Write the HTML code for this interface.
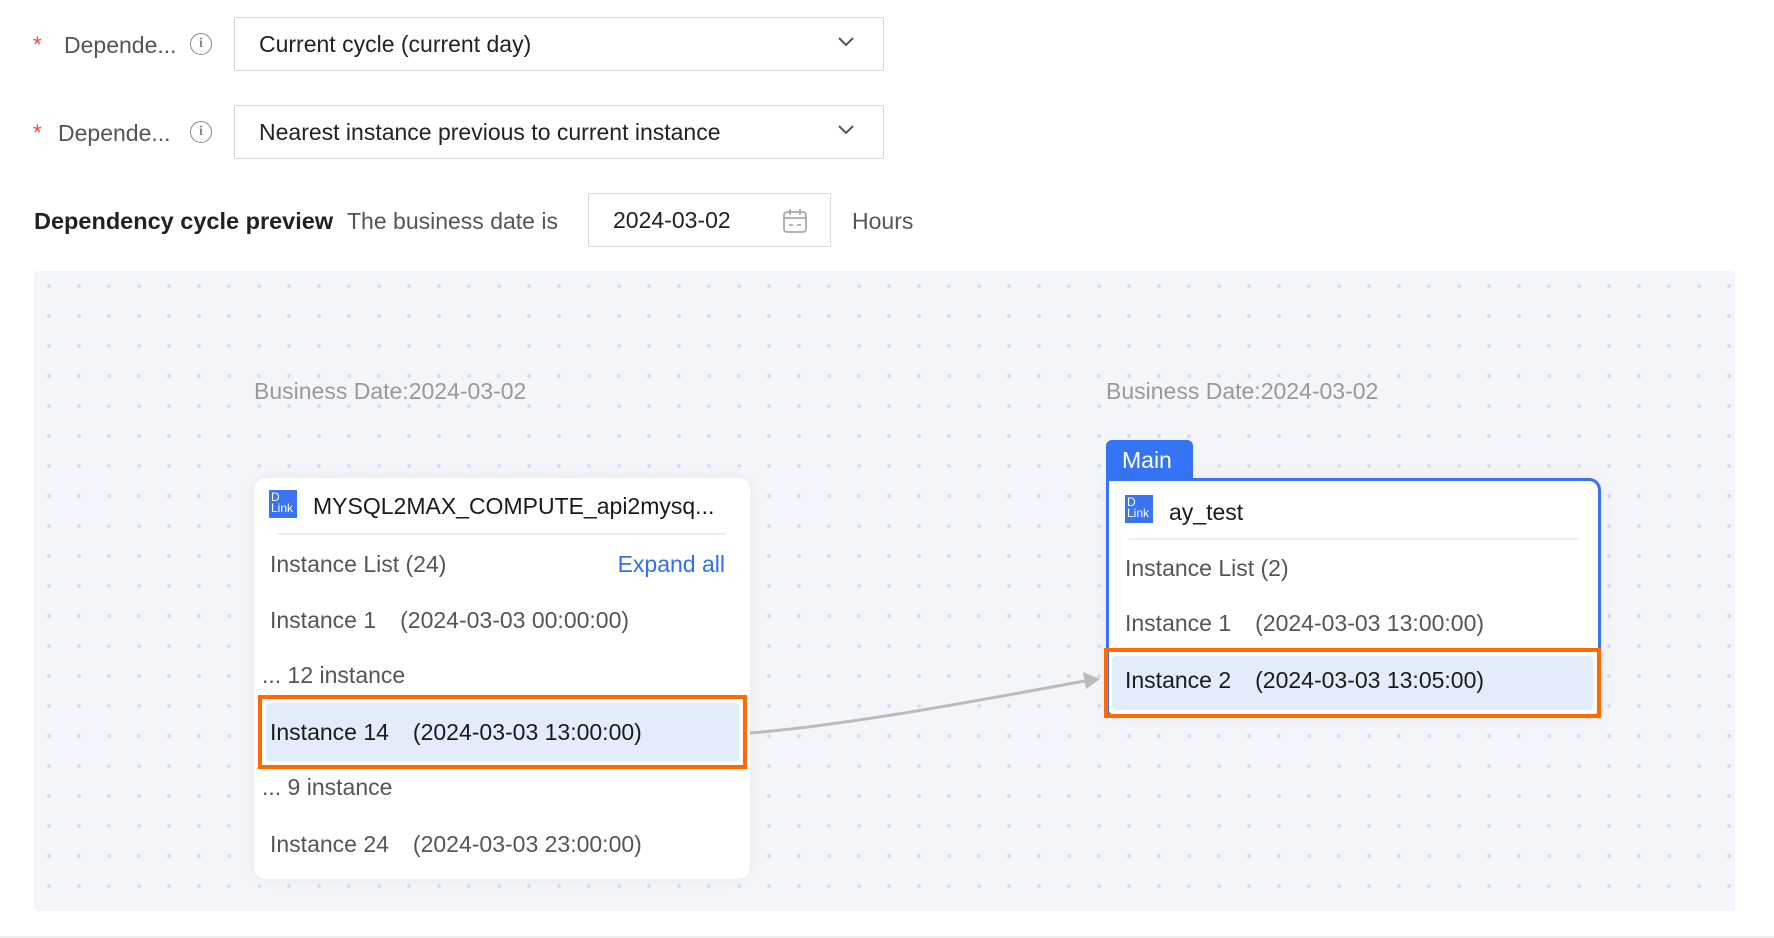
<!DOCTYPE html>
<html><head><meta charset="utf-8"><style>
*{box-sizing:border-box;margin:0;padding:0}
body{width:1774px;height:938px;background:#fff;font-family:"Liberation Sans",sans-serif;color:#333;position:relative;overflow:hidden}
.abs{position:absolute}
.lbl{font-size:23px;color:#555;line-height:26px}
.star{color:#f5463c;font-size:22px}
.sel{position:absolute;left:234px;width:650px;height:54px;border:1px solid #d8d8d8;border-radius:2px;font-size:23px;color:#222;line-height:52px;padding-left:24px}
.chev{position:absolute;right:28px;top:18px}
.info{position:absolute;width:22px;height:22px;border:1.6px solid #888;border-radius:50%;font-size:14px;color:#888;text-align:center;line-height:19px;font-weight:bold;font-family:"Liberation Serif",serif}
.canvas{position:absolute;left:34px;top:271px;width:1701px;height:640px;background-color:#f4f5fa;background-image:radial-gradient(circle,#d6dcf7 1.7px,transparent 2.2px);background-size:30px 30px;background-position:0 0;border-radius:4px}
.bd{position:absolute;font-size:23px;color:#999}
.card{position:absolute;background:#fff;border-radius:12px;box-shadow:0 0 14px rgba(0,0,0,.05)}
.t{position:absolute;font-size:23px;color:#555;white-space:pre;line-height:26px}
.t b{font-weight:normal;display:inline-block;margin-right:24px}
.ic{position:absolute;width:28px;height:28px;background:#3a74f2;color:#fff;font-size:12px;line-height:11px;padding:2px 0 0 2px;font-weight:normal}
.hl{position:absolute;border:4px solid #ff6a00}
.hl div{position:absolute;left:4px;right:4px;top:4px;bottom:4px;background:#e3ecfb;border-radius:4px}
</style></head><body>
<span class="abs star" style="left:33px;top:32px">*</span>
<span class="abs lbl" style="left:64px;top:32px">Depende...</span>
<div class="info" style="left:190px;top:33px">i</div>
<div class="sel" style="top:17px">Current cycle (current day)<svg class="chev" width="18" height="12" viewBox="0 0 18 12"><path d="M2 2l7 7 7-7" fill="none" stroke="#555" stroke-width="2"/></svg></div>
<span class="abs star" style="left:33px;top:120px">*</span>
<span class="abs lbl" style="left:58px;top:120px">Depende...</span>
<div class="info" style="left:190px;top:121px">i</div>
<div class="sel" style="top:105px">Nearest instance previous to current instance<svg class="chev" width="18" height="12" viewBox="0 0 18 12"><path d="M2 2l7 7 7-7" fill="none" stroke="#555" stroke-width="2"/></svg></div>
<span class="abs" style="left:34px;top:208px;font-size:23.5px;font-weight:bold;color:#222">Dependency cycle preview</span>
<span class="abs lbl" style="left:347px;top:208px">The business date is</span>
<div class="abs" style="left:588px;top:193px;width:243px;height:54px;border:1px solid #d8d8d8;border-radius:2px;font-size:23px;color:#222;line-height:52px;padding-left:24px">2024-03-02
<svg class="abs" style="left:193px;top:14px" width="26" height="26" viewBox="0 0 26 26"><rect x="2" y="4" width="22" height="20" rx="3" fill="none" stroke="#aaa" stroke-width="1.8"/><path d="M8 1v6M18 1v6M2 10h22M7 17h4M15 17h4" stroke="#aaa" stroke-width="1.8"/></svg></div>
<span class="abs lbl" style="left:852px;top:208px">Hours</span>
<div class="canvas"></div>
<div class="abs" style="left:0;top:936px;width:1774px;height:2px;background:#eee"></div>
<div class="bd" style="left:254px;top:378px">Business Date:2024-03-02</div>
<div class="bd" style="left:1106px;top:378px">Business Date:2024-03-02</div>

<svg class="abs" style="left:0;top:0" width="1774" height="938"><path d="M750 733 C 850 725, 980 700, 1085 681" fill="none" stroke="#bbb" stroke-width="3"/><path d="M1100 679 L1083 672 L1086 689 Z" fill="#bbb"/></svg>

<div class="card" style="left:254px;top:478px;width:496px;height:401px">
<div class="ic" style="left:15px;top:12px">D<br>Link</div>
<div class="t" style="left:59px;top:15px;color:#1a1a1a">MYSQL2MAX_COMPUTE_api2mysq...</div>
<div class="abs" style="left:23px;top:55px;width:449px;height:2px;background:#eee"></div>
<div class="t" style="left:16px;top:73px">Instance List (24)</div>
<div class="t" style="right:25px;top:73px;color:#2f6ef5">Expand all</div>
<div class="t" style="left:16px;top:129px"><b>Instance 1</b>(2024-03-03 00:00:00)</div>
<div class="t" style="left:8px;top:184px">... 12 instance</div>
<div class="hl" style="left:4px;top:217px;width:489px;height:74px"><div></div></div>
<div class="t" style="left:16px;top:241px;color:#1a1a1a"><b>Instance 14</b>(2024-03-03 13:00:00)</div>
<div class="t" style="left:8px;top:296px">... 9 instance</div>
<div class="t" style="left:16px;top:353px"><b>Instance 24</b>(2024-03-03 23:00:00)</div>
</div>

<div class="abs" style="left:1106px;top:440px;width:87px;height:42px;background:#3574f4;border-radius:6px 6px 0 0;color:#fff;font-size:23px;line-height:40px;padding-left:16px">Main</div>
<div class="card" style="left:1106px;top:478px;width:495px;height:240px;border:3px solid #3574f4;border-radius:0 12px 8px 8px">
<div class="ic" style="left:16px;top:14px">D<br>Link</div>
<div class="t" style="left:60px;top:18px;color:#1a1a1a">ay_test</div>
<div class="abs" style="left:20px;top:57px;width:450px;height:2px;background:#eee"></div>
<div class="t" style="left:16px;top:74px">Instance List (2)</div>
<div class="t" style="left:16px;top:129px"><b>Instance 1</b>(2024-03-03 13:00:00)</div>
</div>
<div class="hl" style="left:1104px;top:648px;width:497px;height:70px"><div></div></div>
<div class="t" style="left:1125px;top:667px;color:#1a1a1a"><b>Instance 2</b>(2024-03-03 13:05:00)</div>
</body></html>
